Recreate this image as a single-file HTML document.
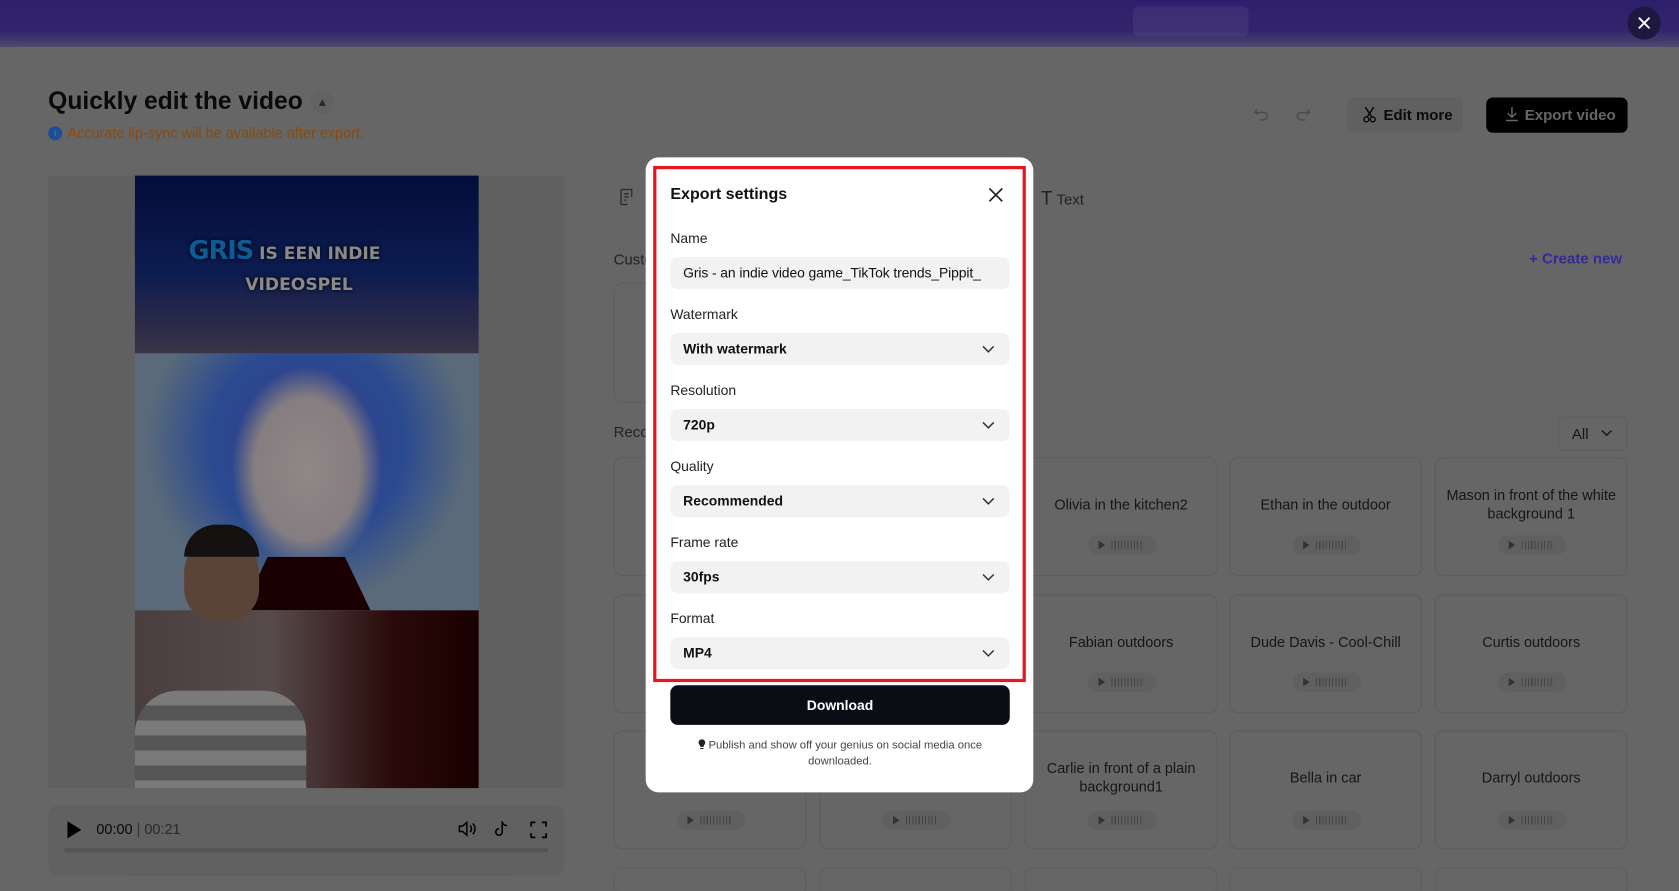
<!DOCTYPE html>
<html><head><meta charset="utf-8">
<style>
*{box-sizing:border-box;margin:0;padding:0}
html,body{width:1679px;height:891px;overflow:hidden;background:#666;font-family:"Liberation Sans",Arial,sans-serif}
#w{position:absolute;left:0;top:0;width:1568px;height:832px;transform:scale(1.07079);transform-origin:0 0;overflow:hidden;background:#666}
.a{position:absolute}
.card{position:absolute;width:180px;height:111px;border:1px solid #5d5d5d;border-radius:8px;background:#666;text-align:center;font-size:13.5px;color:#161616}
.card .t{position:absolute;left:0;right:0;top:0;height:86px;display:flex;align-items:center;justify-content:center;padding:0 8px;line-height:17px}
.card .p{position:absolute;left:58px;top:72px;width:64px;height:18px;border-radius:9px;background:#606060}
.card .p:before{content:"";position:absolute;left:10px;top:5px;border-left:6px solid #333;border-top:4px solid transparent;border-bottom:4px solid transparent}
.card .p:after{content:"";position:absolute;left:22px;top:5px;width:30px;height:8px;background:repeating-linear-gradient(90deg,#444 0 1px,transparent 1px 3px)}
.lbl{position:absolute;left:626px;font-size:13px;color:#222}
.sel{position:absolute;left:626px;width:317px;height:30px;background:#f2f2f2;border-radius:7px;font-size:13px;font-weight:bold;color:#111;padding-left:12px;line-height:30px}
.sel svg{position:absolute;right:14px;top:11px}
</style></head><body>
<div id="w">
<!-- banner -->
<div class="a" style="left:0;top:0;width:1568px;height:44px;background:linear-gradient(#2e1f6c,#32246c 65%,#4f4a6c 100%)"></div>
<div class="a" style="left:0;top:44px;width:1568px;height:800px;background:#666;border-radius:16px 16px 0 0;border-top:1px solid #6a6a6a"></div>
<div class="a" style="left:1058px;top:6px;width:108px;height:28px;border-radius:6px;background:rgba(255,255,255,0.06)"></div>
<div class="a" style="left:1520px;top:6px;width:31px;height:31px;border-radius:16px;background:#1e1840">
<svg width="31" height="31" viewBox="0 0 31 31"><path d="M10.5 10.5L20.5 20.5M20.5 10.5L10.5 20.5" stroke="#fff" stroke-width="1.8"/></svg></div>

<div class="a" style="left:45px;top:81px;font-size:23px;font-weight:bold;color:#0a0a0a">Quickly edit the video</div>
<div class="a" style="left:290px;top:85px;width:22px;height:22px;border-radius:11px;background:#626262;color:#2a2a2a;font-size:11px;text-align:center;line-height:22px">&#x25B2;</div>
<div class="a" style="left:45px;top:118px;width:13px;height:13px;border-radius:7px;background:#1a4f9a;color:#666;font-size:9px;font-weight:bold;text-align:center;line-height:13px">i</div>
<div class="a" style="left:63px;top:117px;font-size:13.5px;color:#8a4a0c">Accurate lip-sync will be available after export.</div>

<svg class="a" style="left:1170px;top:99px" width="16" height="16" viewBox="0 0 16 16"><path d="M4 3L2 6L5 8M2.5 6H10a3.5 3.5 0 0 1 0 7H6" fill="none" stroke="#4a4a4a" stroke-width="1.3"/></svg>
<svg class="a" style="left:1209px;top:99px" width="16" height="16" viewBox="0 0 16 16"><path d="M12 3L14 6L11 8M13.5 6H6a3.5 3.5 0 0 0 0 7H10" fill="none" stroke="#4a4a4a" stroke-width="1.3"/></svg>
<div class="a" style="left:1258px;top:91px;width:108px;height:33px;border-radius:6px;background:#606060;font-size:14px;font-weight:bold;color:#0a0a0a;line-height:33px;padding-left:34px">Edit more</div>
<svg class="a" style="left:1272px;top:99px" width="14" height="16" viewBox="0 0 14 16"><path d="M3 1L9 10M11 1L5 10" stroke="#0a0a0a" stroke-width="1.4" fill="none"/><circle cx="4" cy="12.5" r="2.3" fill="none" stroke="#0a0a0a" stroke-width="1.3"/><circle cx="10" cy="12.5" r="2.3" fill="none" stroke="#0a0a0a" stroke-width="1.3"/></svg>
<div class="a" style="left:1388px;top:91px;width:132px;height:33px;border-radius:6px;background:#000;font-size:14px;font-weight:bold;color:#666;line-height:33px;padding-left:36px">Export video</div>
<svg class="a" style="left:1405px;top:99px" width="14" height="15" viewBox="0 0 14 15"><path d="M7 1V10M3 6.5L7 10.5L11 6.5M1.5 13.5H12.5" stroke="#666" stroke-width="1.4" fill="none"/></svg>

<!-- video area -->
<div class="a" style="left:45px;top:164px;width:482px;height:572px;background:#606060"></div>
<div class="a" style="left:126px;top:164px;width:321px;height:166px;background:linear-gradient(#040d3a,#0d1c50 55%,#2c2a48 85%,#3a3446)"></div>
<div class="a" style="left:176px;top:220px;font-family:'DejaVu Sans',sans-serif;font-weight:bold;font-size:24px;color:#0e5a96;text-shadow:0 0 4px #000;letter-spacing:-1px">GRIS<span style="font-size:16px;color:#8a8a8a;letter-spacing:0"> IS EEN INDIE</span></div>
<div class="a" style="left:229px;top:256px;font-family:'DejaVu Sans',sans-serif;font-weight:bold;font-size:16px;color:#8a8a8a;text-shadow:0 0 4px #000">VIDEOSPEL</div>
<div class="a" style="left:126px;top:330px;width:321px;height:240px;background:radial-gradient(ellipse 70px 95px at 50% 45%,#8f8888 0,#857e80 70%,transparent 100%),radial-gradient(ellipse 150px 150px at 50% 35%,#3a3a8a 0,#2a4a90 60%,#5a6a7a 100%)"></div>
<div class="a" style="left:226px;top:520px;width:120px;height:50px;background:#1a0000;clip-path:polygon(20% 0,80% 0,100% 100%,0 100%)"></div>
<div class="a" style="left:126px;top:570px;width:321px;height:166px;background:linear-gradient(90deg,#4a3e3e,#564a4a 40%,#2a0a0a 75%,#1a0000)"></div>
<div class="a" style="left:172px;top:500px;width:70px;height:80px;border-radius:35px 35px 30px 30px;background:#5a4438"></div>
<div class="a" style="left:172px;top:490px;width:70px;height:30px;border-radius:35px 35px 0 0;background:#141010"></div>
<div class="a" style="left:126px;top:645px;width:160px;height:91px;border-radius:40px 40px 0 0;background:repeating-linear-gradient(#7a7a7a 0 14px,#555 14px 28px)"></div>

<div class="a" style="left:45px;top:752px;width:482px;height:66px;border-radius:10px;background:#616161"></div>
<div class="a" style="left:63px;top:767px;border-left:13px solid #000;border-top:8px solid transparent;border-bottom:8px solid transparent"></div>
<div class="a" style="left:90px;top:767px;font-size:13.5px;color:#070707">00:00 <span style="color:#333">|</span> <span style="color:#2a2a2a">00:21</span></div>
<svg class="a" style="left:427px;top:766px" width="18" height="16" viewBox="0 0 18 16"><path d="M2 5.5H5L9 2V14L5 10.5H2Z" fill="none" stroke="#000" stroke-width="1.4"/><path d="M12 5a4 4 0 0 1 0 6M14.5 3a7 7 0 0 1 0 10" fill="none" stroke="#000" stroke-width="1.4"/></svg>
<svg class="a" style="left:461px;top:765px" width="16" height="18" viewBox="0 0 16 18"><path d="M8 2V12a3 3 0 1 1-3-3M8 2c0 2.5 2 4 4.5 4" fill="none" stroke="#000" stroke-width="1.5"/></svg>
<svg class="a" style="left:495px;top:767px" width="16" height="16" viewBox="0 0 16 16"><path d="M1 5V1H5M11 1H15V5M15 11V15H11M5 15H1V11" fill="none" stroke="#000" stroke-width="1.6"/></svg>
<div class="a" style="left:60px;top:792px;width:452px;height:4px;border-radius:2px;background:#545454"></div>

<!-- right panel -->
<svg class="a" style="left:578px;top:176px" width="16" height="16" viewBox="0 0 16 16"><path d="M2 1H12V8M2 1V15H8M5 5H9M5 8H9M5 11H7" fill="none" stroke="#2a2a2a" stroke-width="1.2"/></svg>
<div class="a" style="left:972px;top:175px;font-size:14px;color:#222"><span style="font-size:18px;font-weight:normal">T</span> Text</div>
<div class="a" style="left:573px;top:234px;font-size:14px;color:#222">Custom</div>
<div class="a" style="left:1428px;top:233px;font-size:14px;font-weight:bold;color:#34299a">+ Create new</div>
<div class="a" style="left:573px;top:264px;width:180px;height:112px;border:1px solid #5d5d5d;border-radius:8px"></div>
<div class="a" style="left:573px;top:395px;font-size:14px;color:#222">Recommended</div>
<div class="a" style="left:1455px;top:389px;width:65px;height:32px;border:1px solid #5d5d5d;border-radius:6px;font-size:14px;color:#161616;line-height:30px;padding-left:12px">All</div>
<svg class="a" style="left:1495px;top:401px" width="11" height="7" viewBox="0 0 11 7"><path d="M1 1L5.5 5.5L10 1" fill="none" stroke="#161616" stroke-width="1.3"/></svg>

<div class="card" style="left:573px;top:427px"><div class="t">Mia</div><div class="p"></div></div>
<div class="card" style="left:765px;top:427px"><div class="t"></div><div class="p"></div></div>
<div class="card" style="left:957px;top:427px"><div class="t">Olivia in the kitchen2</div><div class="p"></div></div>
<div class="card" style="left:1148px;top:427px"><div class="t">Ethan in the outdoor</div><div class="p"></div></div>
<div class="card" style="left:1340px;top:427px"><div class="t">Mason in front of the white background 1</div><div class="p"></div></div>
<div class="card" style="left:573px;top:555px"><div class="t">Chloe</div><div class="p"></div></div>
<div class="card" style="left:765px;top:555px"><div class="t"></div><div class="p"></div></div>
<div class="card" style="left:957px;top:555px"><div class="t">Fabian outdoors</div><div class="p"></div></div>
<div class="card" style="left:1148px;top:555px"><div class="t">Dude Davis - Cool-Chill</div><div class="p"></div></div>
<div class="card" style="left:1340px;top:555px"><div class="t">Curtis outdoors</div><div class="p"></div></div>
<div class="card" style="left:573px;top:682px"><div class="t">Amy</div><div class="p" style="top:74px"></div></div>
<div class="card" style="left:765px;top:682px"><div class="t"></div><div class="p" style="top:74px"></div></div>
<div class="card" style="left:957px;top:682px"><div class="t">Carlie in front of a plain background1</div><div class="p" style="top:74px"></div></div>
<div class="card" style="left:1148px;top:682px"><div class="t">Bella in car</div><div class="p" style="top:74px"></div></div>
<div class="card" style="left:1340px;top:682px"><div class="t">Darryl outdoors</div><div class="p" style="top:74px"></div></div>
<div class="card" style="left:573px;top:810px;height:22px;border-bottom:none;border-radius:8px 8px 0 0"></div>
<div class="card" style="left:765px;top:810px;height:22px;border-bottom:none;border-radius:8px 8px 0 0"></div>
<div class="card" style="left:957px;top:810px;height:22px;border-bottom:none;border-radius:8px 8px 0 0"></div>
<div class="card" style="left:1148px;top:810px;height:22px;border-bottom:none;border-radius:8px 8px 0 0"></div>
<div class="card" style="left:1340px;top:810px;height:22px;border-bottom:none;border-radius:8px 8px 0 0"></div>

<!-- modal -->
<div class="a" style="left:603px;top:147px;width:362px;height:593px;background:#fff;border-radius:12px"></div>
<div class="a" style="left:610px;top:155px;width:348px;height:482px;border:3px solid #e8141e"></div>
<div class="a" style="left:626px;top:173px;font-size:15px;font-weight:bold;color:#111">Export settings</div>
<svg class="a" style="left:922px;top:174px" width="16" height="16" viewBox="0 0 16 16"><path d="M2 2L14 14M14 2L2 14" stroke="#222" stroke-width="1.6"/></svg>
<div class="lbl" style="top:215px">Name</div>
<div class="sel" style="top:240px;font-weight:normal;font-size:13px;color:#111;letter-spacing:-0.1px;overflow:hidden;white-space:nowrap">Gris - an indie video game_TikTok trends_Pippit_</div>
<div class="lbl" style="top:286px">Watermark</div>
<div class="sel" style="top:311px">With watermark<svg width="12" height="8" viewBox="0 0 12 8"><path d="M1 1.5L6 6.5L11 1.5" fill="none" stroke="#333" stroke-width="1.4"/></svg></div>
<div class="lbl" style="top:357px">Resolution</div>
<div class="sel" style="top:382px">720p<svg width="12" height="8" viewBox="0 0 12 8"><path d="M1 1.5L6 6.5L11 1.5" fill="none" stroke="#333" stroke-width="1.4"/></svg></div>
<div class="lbl" style="top:428px">Quality</div>
<div class="sel" style="top:453px">Recommended<svg width="12" height="8" viewBox="0 0 12 8"><path d="M1 1.5L6 6.5L11 1.5" fill="none" stroke="#333" stroke-width="1.4"/></svg></div>
<div class="lbl" style="top:499px">Frame rate</div>
<div class="sel" style="top:524px">30fps<svg width="12" height="8" viewBox="0 0 12 8"><path d="M1 1.5L6 6.5L11 1.5" fill="none" stroke="#333" stroke-width="1.4"/></svg></div>
<div class="lbl" style="top:570px">Format</div>
<div class="sel" style="top:595px">MP4<svg width="12" height="8" viewBox="0 0 12 8"><path d="M1 1.5L6 6.5L11 1.5" fill="none" stroke="#333" stroke-width="1.4"/></svg></div>
<div class="a" style="left:626px;top:640px;width:317px;height:37px;background:#0b0d14;border-radius:7px;color:#fff;font-size:13px;font-weight:bold;text-align:center;line-height:37px">Download</div>
<div class="a" style="left:626px;top:689px;width:317px;text-align:center;font-size:10.5px;line-height:15px;color:#444"><svg width="7" height="10" viewBox="0 0 7 10" style="vertical-align:-1px"><path d="M3.5 0.5a3 3 0 0 1 2 5.3L5 7.5H2L1.5 5.8a3 3 0 0 1 2-5.3ZM2 8.5H5V9.5H2Z" fill="#222"/></svg> Publish and show off your genius on social media once<br>downloaded.</div>
</div>
</body></html>
